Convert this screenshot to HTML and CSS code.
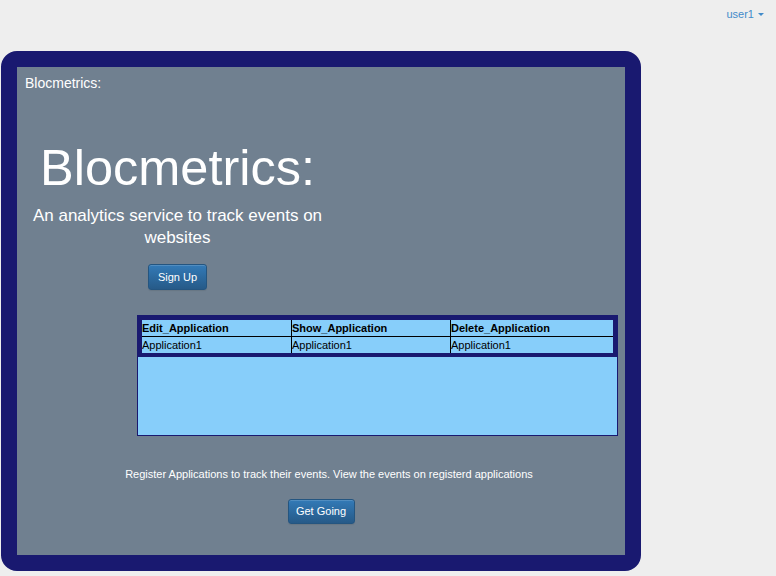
FILE: index.html
```html
<!DOCTYPE html>
<html>
<head>
<meta charset="utf-8">
<link rel="stylesheet" href="styles.css">
</head>
<body>
<nav class="topbar">
  <a class="user-menu" href="#">user1 <span class="caret"></span></a>
</nav>
<div class="frame">
  <div class="brand">Blocmetrics:</div>
  <div class="hero">
    <h1 class="hero-title">Blocmetrics:</h1>
    <p class="hero-sub">An analytics service to track events on websites</p>
    <a class="btn btn-sign" href="#">Sign Up</a>
  </div>
  <div class="apps">
    <table class="apps-table">
      <colgroup><col class="c1"><col class="c2"><col class="c3"></colgroup>
      <tr class="head-row"><th>Edit_Application</th><th>Show_Application</th><th>Delete_Application</th></tr>
      <tr class="data-row"><td>Application1</td><td>Application1</td><td>Application1</td></tr>
    </table>
  </div>
  <p class="register">Register Applications to track their events. View the events on registerd applications</p>
  <div class="go-row"><a class="btn btn-go" href="#">Get Going</a></div>
</div>
</body>
</html>
```
FILE: styles.css
```css
html, body {
  margin: 0;
  padding: 0;
  background: #eeeeee;
  font-family: "Liberation Sans", Arial, sans-serif;
}
.topbar {
  height: 51px;
  display: flex;
  justify-content: flex-end;
  align-items: flex-start;
  padding-right: 12px;
}
.user-menu {
  margin-top: 7px;
  font-size: 11px;
  line-height: 14px;
  color: #428bca;
  text-decoration: none;
  display: flex;
  align-items: center;
  gap: 4px;
}
.caret {
  display: inline-block;
  width: 0;
  height: 0;
  border-top: 3px solid #428bca;
  border-left: 3px solid transparent;
  border-right: 3px solid transparent;
  margin-top: 1px;
}
.frame {
  margin-left: 1px;
  width: 608px;
  height: 488px;
  border: 16px solid #191970;
  border-radius: 16px;
  background: #708090;
  color: #ffffff;
}
.brand {
  padding: 8px 8px;
  font-size: 14px;
  line-height: 16px;
}
.hero {
  width: 321px;
  text-align: center;
}
.hero-title {
  margin: 40px 0 0 0;
  font-size: 50.5px;
  line-height: 58px;
  font-weight: normal;
}
.hero-sub {
  margin: 8px 0 0 0;
  font-size: 17px;
  line-height: 22px;
}
.btn {
  display: inline-block;
  box-sizing: border-box;
  margin-top: 15px;
  height: 26px;
  padding: 0;
  text-align: center;
  font-size: 11px;
  line-height: 24px;
  color: #ffffff;
  text-decoration: none;
  background: linear-gradient(to bottom, #337ab7 0%, #265a88 100%);
  border: 1px solid #245580;
  border-radius: 3px;
  box-shadow: inset 0 1px 0 rgba(255,255,255,0.15), 0 1px 1px rgba(0,0,0,0.08);
}
.btn-sign {
  width: 59px;
}
.apps {
  margin: 25px 0 0 120px;
  width: 479px;
  height: 119px;
  background: #87cefa;
  border: 1px solid #191970;
}
.apps-table {
  border-collapse: separate;
  border-spacing: 0;
  table-layout: fixed;
  width: 479px;
  box-sizing: border-box;
  border: 4px solid #191970;
  color: #000000;
  font-size: 11px;
}
.apps-table col.c1 { width: 149px; }
.apps-table col.c2 { width: 159px; }
.apps-table th,
.apps-table td {
  box-sizing: border-box;
  padding: 0 1px 0 0;
  line-height: 15px;
  text-align: left;
  white-space: nowrap;
  overflow: hidden;
}
.apps-table th + th,
.apps-table td + td {
  border-left: 1px solid #000000;
}
.head-row th {
  height: 16px;
  font-weight: bold;
}
.data-row td {
  height: 17px;
  border-top: 1px solid #000000;
  font-weight: normal;
}
.register {
  margin: 31px 0 0 0;
  padding-left: 16px;
  text-align: center;
  font-size: 11px;
  line-height: 15px;
}
.go-row {
  text-align: center;
}
.btn-go {
  margin-top: 17px;
  width: 67px;
  height: 25px;
  line-height: 23px;
}
```
